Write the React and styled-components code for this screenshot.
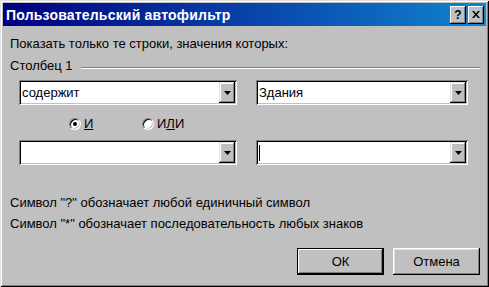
import React from 'react';
import styled, { createGlobalStyle } from 'styled-components';

const Global = createGlobalStyle`
  html, body {
    margin: 0;
    padding: 0;
    background: #c0c0c0;
  }
  body {
    font-family: "Liberation Sans", Arial, sans-serif;
    font-size: 13px;
    color: #000;
  }
`;

const Window = styled.div`
  width: 489px;
  height: 287px;
  box-sizing: border-box;
  padding: 3px;
  background: #c0c0c0;
  box-shadow:
    inset 1px 1px #dfdfdf,
    inset -1px -1px #000,
    inset 2px 2px #fff,
    inset -2px -2px #808080;
  display: flex;
  flex-direction: column;
`;

const TitleBar = styled.div`
  height: 23px;
  display: flex;
  align-items: center;
  padding: 0 2px 0 3px;
  background: linear-gradient(to right, #000080, #1084d0);
  color: #fff;
  font-weight: bold;
  font-size: 14px;
`;

const Title = styled.div`
  flex: 1;
  letter-spacing: 0.2px;
`;

const TitleButton = styled.div`
  width: 16px;
  height: 18px;
  box-sizing: border-box;
  margin-left: ${p => (p.gap ? '2px' : '0')};
  background: #c0c0c0;
  box-shadow:
    inset -1px -1px #000,
    inset 1px 1px #fff,
    inset -2px -2px #808080;
  display: flex;
  align-items: center;
  justify-content: center;
  color: #000;
  font-size: 12px;
  font-weight: bold;
`;

const Body = styled.div`
  flex: 1;
  padding: 11px 6px 0 7px;
  display: flex;
  flex-direction: column;
`;

const Label = styled.div`
  height: 14px;
  line-height: 14px;
  white-space: nowrap;
`;

const GroupHead = styled.div`
  display: flex;
  align-items: center;
  margin-top: 8px;
  height: 14px;
  line-height: 14px;
`;

const GroupLine = styled.div`
  flex: 1;
  margin: 3px 0 0 8px;
  height: 0;
  border-top: 1px solid #808080;
  border-bottom: 1px solid #fff;
`;

const ComboRow = styled.div`
  display: grid;
  grid-template-columns: 218px 212px;
  column-gap: 19px;
  padding-left: 9px;
  margin-top: ${p => p.top}px;
`;

const Combo = styled.div`
  height: 25px;
  box-sizing: border-box;
  background: #fff;
  box-shadow:
    inset 1px 1px #808080,
    inset -1px -1px #fff,
    inset 2px 2px #000,
    inset -2px -2px #c0c0c0;
  display: flex;
  align-items: center;
  padding: 2px;
`;

const ComboText = styled.div`
  flex: 1;
  padding-left: 1px;
  white-space: nowrap;
`;

const Caret = styled.span`
  display: inline-block;
  width: 1px;
  height: 16px;
  background: #000;
  vertical-align: middle;
`;

const DropButton = styled.div`
  width: 16px;
  align-self: stretch;
  background: #c0c0c0;
  box-shadow:
    inset -1px -1px #000,
    inset 1px 1px #dfdfdf,
    inset -2px -2px #808080,
    inset 2px 2px #fff;
  display: flex;
  align-items: center;
  justify-content: center;
`;

const RadioRow = styled.div`
  display: flex;
  align-items: center;
  margin-top: 12px;
  padding-left: 59px;
  height: 13px;
`;

const RadioItem = styled.label`
  display: flex;
  align-items: center;
  width: ${p => p.w}px;
`;

const RadioCircle = styled.span`
  width: 12px;
  height: 12px;
  box-sizing: border-box;
  border-radius: 50%;
  background: #fff;
  border: 1px solid;
  border-color: #808080 #fff #fff #808080;
  box-shadow: inset 1px 1px #000, inset -1px -1px #c0c0c0;
  display: flex;
  align-items: center;
  justify-content: center;
  margin-right: 3px;
`;

const RadioDot = styled.span`
  width: 4px;
  height: 4px;
  border-radius: 50%;
  background: #000;
`;

const U = styled.span`
  text-decoration: underline;
`;

const Hint = styled.div`
  height: 14px;
  line-height: 14px;
  margin-top: ${p => p.top}px;
  white-space: nowrap;
`;

const Buttons = styled.div`
  display: flex;
  justify-content: flex-end;
  gap: 9px;
  margin-top: 17px;
`;

const Button = styled.div`
  width: 87px;
  height: 27px;
  box-sizing: border-box;
  background: #c0c0c0;
  box-shadow: ${p =>
    p.def
      ? 'inset 0 0 0 1px #000, inset -2px -2px #000, inset 2px 2px #fff, inset -3px -3px #808080'
      : 'inset -1px -1px #000, inset 1px 1px #fff, inset -2px -2px #808080, inset 2px 2px #dfdfdf'};
  display: flex;
  align-items: center;
  justify-content: center;
`;

const Arrow = () => (
  <svg width="7" height="4" viewBox="0 0 7 4">
    <path d="M0 0h7L3.5 4z" fill="#000" />
  </svg>
);

const Dropdown = ({ children }) => (
  <Combo>
    <ComboText>{children}</ComboText>
    <DropButton>
      <Arrow />
    </DropButton>
  </Combo>
);

export default function App() {
  return (
    <>
      <Global />
      <Window>
        <TitleBar>
          <Title>Пользовательский автофильтр</Title>
          <TitleButton>?</TitleButton>
          <TitleButton gap>
            <svg width="8" height="7" viewBox="0 0 8 7">
              <path d="M0 0h2l2 2.5L6 0h2L5 3.5 8 7H6L4 4.5 2 7H0l3-3.5z" fill="#000" />
            </svg>
          </TitleButton>
        </TitleBar>
        <Body>
          <Label>Показать только те строки, значения которых:</Label>
          <GroupHead>
            Столбец 1
            <GroupLine />
          </GroupHead>
          <ComboRow top={7}>
            <Dropdown>содержит</Dropdown>
            <Dropdown>Здания</Dropdown>
          </ComboRow>
          <RadioRow>
            <RadioItem w={73}>
              <RadioCircle>
                <RadioDot />
              </RadioCircle>
              <U>И</U>
            </RadioItem>
            <RadioItem w={60}>
              <RadioCircle />
              И<U>Л</U>И
            </RadioItem>
          </RadioRow>
          <ComboRow top={10}>
            <Dropdown />
            <Dropdown>
              <Caret />
            </Dropdown>
          </ComboRow>
          <Hint top={31}>Символ "?" обозначает любой единичный символ</Hint>
          <Hint top={7}>Символ "*" обозначает последовательность любых знаков</Hint>
          <Buttons>
            <Button def>ОК</Button>
            <Button>Отмена</Button>
          </Buttons>
        </Body>
      </Window>
    </>
  );
}
